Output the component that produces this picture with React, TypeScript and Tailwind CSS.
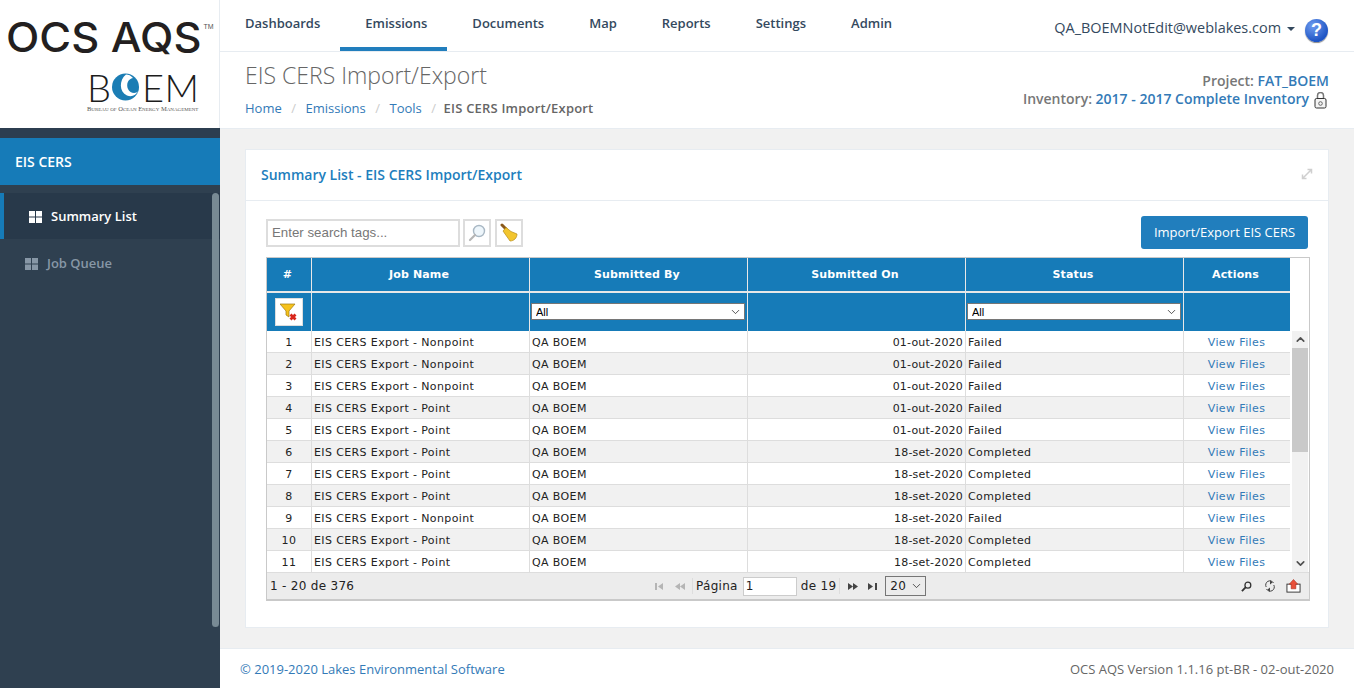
import { ChevronDown, ChevronUp } from "lucide-react";

const rows = [
  ["1", "EIS CERS Export - Nonpoint", "01-out-2020", "Failed"],
  ["2", "EIS CERS Export - Nonpoint", "01-out-2020", "Failed"],
  ["3", "EIS CERS Export - Nonpoint", "01-out-2020", "Failed"],
  ["4", "EIS CERS Export - Point", "01-out-2020", "Failed"],
  ["5", "EIS CERS Export - Point", "01-out-2020", "Failed"],
  ["6", "EIS CERS Export - Point", "18-set-2020", "Completed"],
  ["7", "EIS CERS Export - Point", "18-set-2020", "Completed"],
  ["8", "EIS CERS Export - Point", "18-set-2020", "Completed"],
  ["9", "EIS CERS Export - Nonpoint", "18-set-2020", "Failed"],
  ["10", "EIS CERS Export - Point", "18-set-2020", "Completed"],
  ["11", "EIS CERS Export - Point", "18-set-2020", "Completed"],
];

const navItems = ["Dashboards", "Emissions", "Documents", "Map", "Reports", "Settings", "Admin"];
const crumbs = ["Home", "Emissions", "Tools"];
const gridCols = "grid grid-cols-[45px_218px_218px_218px_218px_106px]";

function GridIcon({ className }: { className: string }) {
  return (
    <svg width="13" height="12" viewBox="0 0 13 12" className={className} fill="currentColor">
      <rect x="0" y="0" width="6" height="5.5" />
      <rect x="7" y="0" width="6" height="5.5" />
      <rect x="0" y="6.5" width="6" height="5.5" />
      <rect x="7" y="6.5" width="6" height="5.5" />
    </svg>
  );
}

function Logo() {
  return (
    <div className="h-[128px] w-[220px] shrink-0 overflow-hidden border-r border-[#e7ecf1] bg-white pl-[6px] pt-[14px]">
      <div className="flex items-start text-[#231f20]">
        <span className="origin-left scale-x-[1.06] font-['Inter',sans-serif] text-[41px] font-medium leading-[46px] whitespace-nowrap">
          OCS AQS
        </span>
        <span className="ml-[13px] mt-[9px] font-['Liberation_Sans',sans-serif] text-[7px] leading-[8px] text-[#555]">TM</span>
      </div>
      <div className="ml-[81px] mt-[13px] w-[112px]">
        <div className="flex h-[28px] items-center font-['Lato',sans-serif] text-[38px] font-light leading-[28px] text-[#1c1c1c]">
          <span className="w-[24px]">B</span>
          <svg width="29" height="28" viewBox="0 0 29 28" className="shrink-0">
            <circle cx="14.5" cy="14" r="13.5" fill="#1b7db4" />
            <path d="M15 1.5C8 7 8 19 16 22.5C21 24.5 25 22 27.5 18C25 21 19 20.5 17 16C15 11 17 6 22 5C20 2.5 17.500 1.500 15 1.5Z" fill="#fff" />
          </svg>
          <span className="ml-[2px] w-[25px]">E</span>
          <span className="-ml-[1px]">M</span>
        </div>
        <div className="mt-[4px] whitespace-nowrap font-['Liberation_Serif',serif] text-[6.5px] leading-[7px] text-[#555] [font-variant:small-caps]">
          Bureau of Ocean Energy Management
        </div>
      </div>
    </div>
  );
}

function Sidebar() {
  return (
    <aside className="flex h-full w-[220px] shrink-0 flex-col bg-[#2f4050] font-['Open_Sans',sans-serif]">
      <Logo />
      <div className="h-[10px] bg-[#2c3e50]" />
      <div className="flex h-[47px] items-center bg-[#167bb8] pl-[15px] text-[14px] font-semibold text-white">EIS CERS</div>
      <div className="relative flex-1 pt-[8px]">
        <div className="flex h-[46px] items-center border-l-[4px] border-[#167bb8] bg-[#28394a] pl-[25px] pt-[1px] text-[13px] font-semibold text-white">
          <GridIcon className="mr-[9px] text-white" />
          Summary List
        </div>
        <div className="flex h-[49px] items-center pl-[25px] text-[13px] font-semibold text-[#8797a6]">
          <GridIcon className="mr-[9px] text-[#8797a6]" />
          Job Queue
        </div>
        <div className="absolute right-[1px] top-[8px] h-[434px] w-[7px] rounded-[4px] bg-[#788a94]" />
      </div>
    </aside>
  );
}

function TopBar() {
  return (
    <header className="flex h-[52px] shrink-0 items-start justify-between border-b border-[#e7ecf1] bg-white font-['Open_Sans',sans-serif]">
      <nav className="flex h-[51px]">
        {navItems.map((item) => (
          <div
            key={item}
            className={`h-[51px] pl-[25px] pr-[20px] pt-[14px] text-[13px] font-semibold leading-[18px] text-[#34495e] ${
              item === "Emissions" ? "border-b-[4px] border-[#217ebd]" : ""
            }`}
          >
            {item}
          </div>
        ))}
      </nav>
      <div className="flex items-center pr-[26px] pt-[18px] text-[14.45px] leading-[20px] text-[#34495e]">
        <span className="mb-[4px]">QA_BOEMNotEdit@weblakes.com</span>
        <span className="mb-[2px] ml-[6px] h-0 w-0 border-x-[4px] border-t-[4px] border-x-transparent border-t-[#34495e]" />
        <span className="ml-[10px] flex h-[23px] w-[23px] items-center justify-center rounded-full bg-[radial-gradient(circle_at_35%_30%,#6f9df0,#1f55c4_70%)] font-['Liberation_Sans',sans-serif] text-[18px] font-bold text-white shadow-[0_1px_1px_#8a8a8a]">
          ?
        </span>
      </div>
    </header>
  );
}

function PageHeading() {
  return (
    <section className="flex h-[77px] shrink-0 justify-between border-b border-[#e7ecf1] bg-white pl-[25px] pr-[25px] font-['Open_Sans',sans-serif]">
      <div>
        <h1 className="pt-[7px] text-[23px] font-light leading-[32px] text-[#666]">EIS CERS Import/Export</h1>
        <div className="mt-[8px] flex items-center text-[13px] leading-[18px]">
          {crumbs.map((crumb) => (
            <span key={crumb} className="flex">
              <span className="text-[#337ab7]">{crumb}</span>
              <span className="px-[9.5px] text-[#ccc]">/</span>
            </span>
          ))}
          <span className="-ml-[2px] font-semibold tracking-[0.2px] text-[#666]">EIS CERS Import/Export</span>
        </div>
      </div>
      <div className="pt-[20px] text-right text-[14px] font-semibold leading-[18px] text-[#777]">
        <div>
          Project: <span className="text-[#337ab7]">FAT_BOEM</span>
        </div>
        <div className="flex h-[18px] items-center justify-end pr-[2px]">
          <span>Inventory:&nbsp;</span>
          <span className="text-[#337ab7]">2017 - 2017 Complete Inventory</span>
          <svg width="13" height="17" viewBox="0 0 13 17" className="ml-[5px] translate-y-[1px]" fill="none">
            <path d="M3.500 7V3.500a3 3 0 0 1 6 0V7" stroke="#777" strokeWidth="1.500" />
            <rect x="1" y="6.500" width="11" height="9.500" rx="1.500" fill="#f4f4f4" stroke="#333" />
            <circle cx="6.500" cy="11.500" r="1.800" stroke="#666" />
          </svg>
        </div>
      </div>
    </section>
  );
}

function Toolbar() {
  return (
    <div className="flex h-[56px] items-center justify-between pb-[8px] pr-[20px] pt-[15px]">
      <div className="flex items-center">
        <input
          placeholder="Enter search tags..."
          className="h-[28px] w-[194px] border-2 border-[#ddd] bg-white px-[4px] font-['Liberation_Sans',sans-serif] text-[13.3px] text-[#333] outline-none placeholder:text-[#777]"
        />
        <span className="ml-[3px] flex h-[28px] w-[28px] items-center justify-center border-2 border-[#ddd] bg-white">
          <svg width="18" height="18" viewBox="0 0 18 18" fill="none">
            <circle cx="11" cy="7" r="5.500" fill="#eef6fb" stroke="#a9b8c4" strokeWidth="1.400" />
            <path d="M7 11L2 16" stroke="#b5b5b5" strokeWidth="2.200" strokeLinecap="round" />
          </svg>
        </span>
        <span className="ml-[4px] flex h-[28px] w-[28px] items-center justify-center border-2 border-[#ddd] bg-white">
          <svg width="20" height="20" viewBox="0 0 20 20">
            <path d="M3 2L7 6" stroke="#8a5a1c" strokeWidth="3" strokeLinecap="round" />
            <path d="M7 4.500L12 8.500L18 11C18 15 15 18 11 18C9 15 6 11 4 8Z" fill="#f2c52e" stroke="#b88d17" strokeWidth="0.700" />
          </svg>
        </span>
      </div>
      <button className="h-[33px] w-[167px] rounded-[3px] bg-[#217ebd] text-[13px] text-white">Import/Export EIS CERS</button>
    </div>
  );
}

function ToolbarArrow({ d, muted }: { d: string; muted?: boolean }) {
  return (
    <svg width="10" height="7" viewBox="0 0 10 7" fill={muted ? "#b5b5b5" : "#444"}>
      <path d={d} />
    </svg>
  );
}

function SelectBox({ value, className, bg }: { value: string; className: string; bg: string }) {
  return (
    <span className={`relative inline-flex ${className}`}>
      <select className={`h-full w-full appearance-none rounded-none border border-[#767676] pl-[4px] ${bg}`}>
        <option>{value}</option>
      </select>
      <ChevronDown size={13} strokeWidth={1.4} color="#222" className="pointer-events-none absolute right-[3px] top-1/2 -translate-y-1/2" />
    </span>
  );
}

function DataGrid() {
  return (
    <div className="mr-[18px] border-x border-b-2 border-t border-[#c9c9c9] font-['DejaVu_Sans',sans-serif] text-[11px]">
      <div className="flex">
        <div className="w-[1023px] shrink-0">
          <div className={`${gridCols} h-[33px] bg-[#167bb8] text-center font-bold leading-[34px] tracking-[0.15px] text-white`}>
            {["#", "Job Name", "Submitted By", "Submitted On", "Status", "Actions"].map((head, i) => (
              <div key={head} className={`pr-[3px] ${i < 5 ? "border-r border-[#e8e8e8]" : ""}`}>
                {head}
              </div>
            ))}
          </div>
          <div className={`${gridCols} h-[40px] border-t-2 border-[#e8e8e8] bg-[#167bb8]`}>
            <div className="flex items-center justify-center border-r border-[#e8e8e8]">
              <span className="flex h-[28px] w-[28px] items-center justify-center border border-[#ddd] bg-white">
                <svg width="18" height="18" viewBox="0 0 18 18">
                  <path d="M0 1H15L9 8V14L6 12V8Z" fill="#f6c21c" stroke="#9c7a12" strokeWidth="0.700" />
                  <path d="M10.500 11.500L15.500 16.500M15.500 11.500L10.500 16.500" stroke="#d8261c" strokeWidth="2.800" />
                </svg>
              </span>
            </div>
            <div className="border-r border-[#e8e8e8]" />
            {[0, 1, 2].map((col) =>
              col === 1 ? (
                <div key={col} className="border-r border-[#e8e8e8]" />
              ) : (
                <div key={col} className="flex items-end border-r border-[#e8e8e8] pb-[11px] pl-[1px]">
                  <SelectBox
                    value="All"
                    bg="bg-white"
                    className="h-[17px] w-[214px] font-['Liberation_Sans',sans-serif] text-[11px] text-black"
                  />
                </div>
              ),
            )}
            <div />
          </div>
          <div className="h-[241px] overflow-hidden">
            {rows.map(([num, name, date, status], i) => (
              <div
                key={num}
                className={`${gridCols} h-[22px] border-b border-[#ddd] leading-[23px] tracking-[0.38px] text-[#222] ${i % 2 ? "bg-[#f1f1f1]" : "bg-white"}`}
              >
                <div className="border-r border-[#ddd] text-center">{num}</div>
                <div className="border-r border-[#ddd] pl-[2px]">{name}</div>
                <div className="border-r border-[#ddd] pl-[2px]">QA BOEM</div>
                <div className="border-r border-[#ddd] pr-[2px] text-right tracking-[0.2px]">{date}</div>
                <div className="border-r border-[#ddd] pl-[2px]">{status}</div>
                <div className="pr-[1px] text-center text-[#337ab7]">View Files</div>
              </div>
            ))}
          </div>
        </div>
        <div className="flex w-[19px] shrink-0 flex-col bg-white pl-[2px] pr-[1px] pt-[73px]">
          <div className="flex flex-1 flex-col bg-[#f1f1f1]">
            <div className="flex h-[17px] items-center justify-center">
              <ChevronUp size={13} strokeWidth={3} color="#505050" />
            </div>
            <div className="h-[104px] bg-[#c9c9c9]" />
            <div className="flex-1" />
            <div className="flex h-[17px] items-center justify-center">
              <ChevronDown size={13} strokeWidth={3} color="#505050" />
            </div>
          </div>
        </div>
      </div>
      <div className="flex h-[27px] items-center border-t border-[#ddd] bg-[#ececec] pl-[3px] pr-[8px] text-[12px] tracking-[0.3px] text-[#222]">
        <span className="w-[382px] shrink-0">1 - 20 de 376</span>
        <div className="flex items-center">
          <span className="flex w-[40px] items-center justify-between pl-[3px] pr-[7px]">
            <ToolbarArrow muted d="M0 0H2V7H0ZM3 3.500L8 0V7Z" />
            <ToolbarArrow muted d="M0 3.500L5 0V7ZM5 3.500L10 0V7Z" />
          </span>
          <span className="h-[16px] w-[1px] bg-[#ddd]" />
          <span className="ml-[3px]">Página</span>
          <input
            defaultValue="1"
            className="ml-[5px] h-[19px] w-[54px] border border-[#ccc] bg-white px-[2px] text-[12px] outline-none"
          />
          <span className="ml-[4px]">de 19</span>
          <span className="ml-[3px] mr-[8px] h-[16px] w-[1px] bg-[#ddd]" />
          <span className="flex w-[30px] items-center justify-between">
            <ToolbarArrow d="M0 0L5 3.500L0 7ZM5 0L10 3.500L5 7Z" />
            <ToolbarArrow d="M0 0L5 3.500L0 7ZM7 0H9V7H7Z" />
          </span>
          <SelectBox value="20" bg="bg-[#ececec]" className="ml-[7px] h-[20px] w-[41px] text-[12px] text-[#222]" />
        </div>
        <div className="flex flex-1 items-center justify-end">
          <svg width="11" height="11" viewBox="0 0 12 12" fill="none">
            <circle cx="7.500" cy="4.500" r="3.200" stroke="#333" strokeWidth="1.400" />
            <path d="M5 7L1 11" stroke="#333" strokeWidth="2" />
          </svg>
          <svg width="12" height="12" viewBox="0 0 12 12" fill="none" className="ml-[12px]">
            <path d="M9.500 3A4 4 0 0 0 2.200 7M2.500 9A4 4 0 0 0 9.800 5" stroke="#444" />
            <path d="M6 0L8.500 2.500L6 4.500ZM6 7.500L3.500 9.500L6 12Z" fill="#444" />
          </svg>
          <svg width="15" height="14" viewBox="0 0 16 14" className="ml-[10px]">
            <rect x="1" y="5" width="14" height="8.500" fill="#fff" stroke="#333" />
            <path d="M8 0L12.500 5H10.500V10H5.500V5H3.500Z" fill="#e8503a" stroke="#a52a1a" strokeWidth="0.600" />
          </svg>
        </div>
      </div>
    </div>
  );
}

export default function App() {
  return (
    <div className="flex h-[688px] w-[1354px] overflow-hidden bg-[#f1f1f1]">
      <Sidebar />
      <main className="flex min-w-0 flex-1 flex-col">
        <TopBar />
        <PageHeading />
        <div className="flex-1 pl-[25px] pr-[25px] pt-[20px]">
          <div className="h-[479px] border border-[#e7ecf1] bg-white font-['Open_Sans',sans-serif]">
            <div className="flex h-[51px] items-center justify-between border-b border-[#e7ecf1] pb-[2px] pl-[15px] pr-[15px]">
              <h2 className="text-[14px] font-semibold text-[#217ebd]">Summary List - EIS CERS Import/Export</h2>
              <svg width="12" height="12" viewBox="0 0 12 12" stroke="#cfcfcf" strokeWidth="1.500" fill="none">
                <path d="M2 10L10 2M6.500 1.500H10.500V5.500M1.500 6.500V10.500H5.500" />
              </svg>
            </div>
            <div className="pl-[20px]">
              <Toolbar />
              <DataGrid />
            </div>
          </div>
        </div>
        <footer className="flex h-[40px] shrink-0 items-center justify-between border-t border-[#e7ecf1] bg-white pl-[20px] pr-[20px] pt-[2px] font-['Open_Sans',sans-serif] text-[13px]">
          <span className="text-[#337ab7]">© 2019-2020 Lakes Environmental Software</span>
          <span className="text-[#666]">OCS AQS Version 1.1.16 pt-BR - 02-out-2020</span>
        </footer>
      </main>
    </div>
  );
}
